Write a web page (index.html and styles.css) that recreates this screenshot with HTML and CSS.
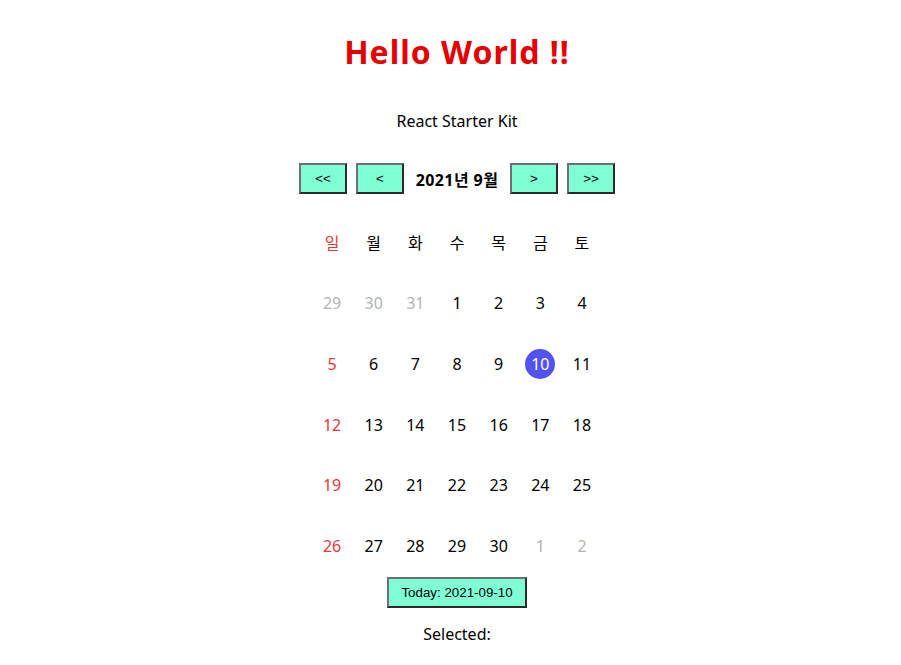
FILE: index.html
```html
<!DOCTYPE html>
<html lang="ko">
<head>
<meta charset="utf-8">
<link rel="stylesheet" href="styles.css">
</head>
<body>
<div class="app">
  <h1 class="title">Hello World !!</h1>
  <p class="subtitle">React Starter Kit</p>
  <div class="nav">
    <button class="btn nav-btn">&lt;&lt;</button>
    <button class="btn nav-btn">&lt;</button>
    <span class="month">2021년 9월</span>
    <button class="btn nav-btn">&gt;</button>
    <button class="btn nav-btn">&gt;&gt;</button>
  </div>
  <div class="grid">
    <div class="cell sun">일</div><div class="cell">월</div><div class="cell">화</div><div class="cell">수</div><div class="cell">목</div><div class="cell">금</div><div class="cell">토</div>
    <div class="cell muted">29</div><div class="cell muted">30</div><div class="cell muted">31</div><div class="cell">1</div><div class="cell">2</div><div class="cell">3</div><div class="cell">4</div>
    <div class="cell sun">5</div><div class="cell">6</div><div class="cell">7</div><div class="cell">8</div><div class="cell">9</div><div class="cell"><span class="today">10</span></div><div class="cell">11</div>
    <div class="cell sun">12</div><div class="cell">13</div><div class="cell">14</div><div class="cell">15</div><div class="cell">16</div><div class="cell">17</div><div class="cell">18</div>
    <div class="cell sun">19</div><div class="cell">20</div><div class="cell">21</div><div class="cell">22</div><div class="cell">23</div><div class="cell">24</div><div class="cell">25</div>
    <div class="cell sun">26</div><div class="cell">27</div><div class="cell">28</div><div class="cell">29</div><div class="cell">30</div><div class="cell muted">1</div><div class="cell muted">2</div>
  </div>
  <button class="btn today-btn">Today: 2021-09-10</button>
  <p class="selected">Selected:</p>
</div>
</body>
</html>
```
FILE: styles.css
```css
html, body {
  margin: 0;
  padding: 0;
  background: #fff;
}
body {
  font-family: "Noto Sans", "Noto Sans CJK KR", sans-serif;
  color: #000;
  padding-left: 13px;
}
.app {
  display: flex;
  flex-direction: column;
  align-items: center;
}
.title {
  margin: 0;
  padding-top: 32px;
  font-size: 32px;
  line-height: 40px;
  font-weight: bold;
  letter-spacing: 1px;
  color: #e60000;
}
.subtitle {
  margin: 37px 0 0;
  font-size: 16px;
  line-height: 24px;
}
.nav {
  margin-top: 30px;
  display: flex;
  align-items: center;
  gap: 9px;
}
.btn {
  background: #7fffd4;
  border-style: solid;
  border-width: 2px;
  border-color: #707070 #2b2b2b #2b2b2b #707070;
  font-family: "Liberation Sans", Arial, sans-serif;
  font-size: 13.33px;
  color: #000;
  padding: 0;
  height: 31px;
}
.nav-btn {
  width: 48px;
}
.month {
  font-weight: bold;
  font-size: 16px;
  letter-spacing: 0.4px;
  width: 88px;
  text-align: center;
}
.grid {
  margin-top: 18px;
  display: grid;
  grid-template-columns: repeat(7, 41.67px);
  grid-auto-rows: 60.75px;
}
.cell {
  display: flex;
  align-items: center;
  justify-content: center;
  font-size: 16px;
}
.sun { color: #e53935; }
.muted { color: #b4b4b4; }
.today {
  width: 30px;
  height: 30px;
  border-radius: 50%;
  background: #5252f0;
  color: #fff;
  display: flex;
  align-items: center;
  justify-content: center;
}
.today-btn {
  width: 140px;
}
.selected {
  margin: 14px 0 0;
  font-size: 16px;
  line-height: 24px;
}
```
